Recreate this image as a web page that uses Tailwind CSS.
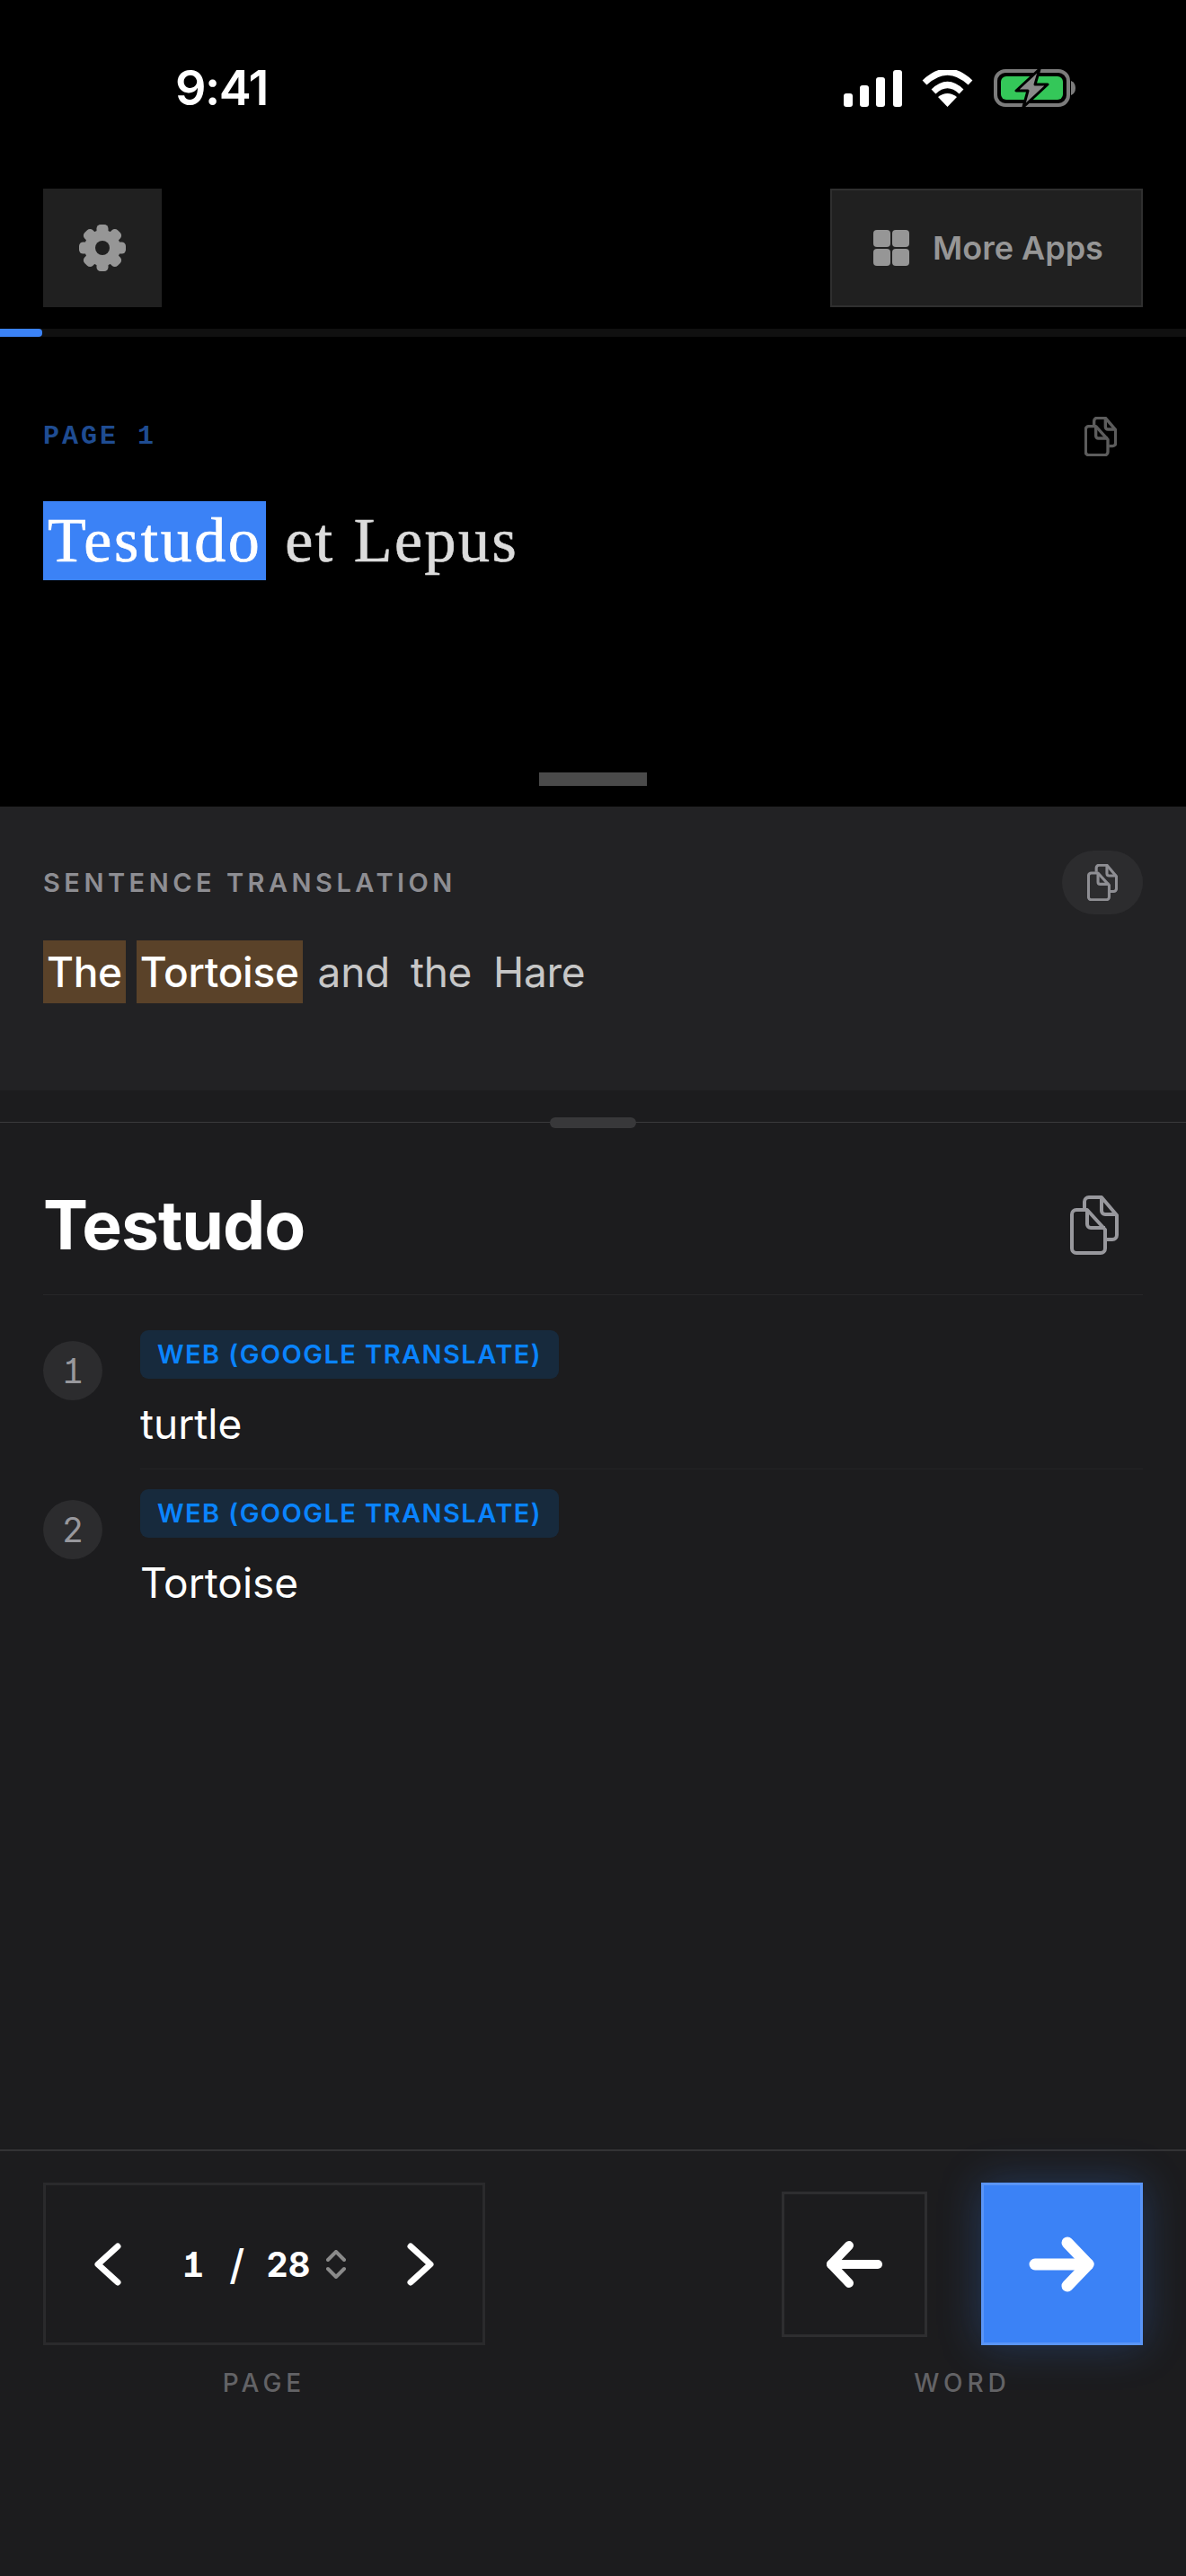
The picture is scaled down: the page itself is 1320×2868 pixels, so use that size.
<!DOCTYPE html>
<html lang="en">
<head>
    <meta charset="UTF-8">
    <meta name="viewport" content="width=device-width, initial-scale=1.0">
    <title>Reader</title>
    <script src="https://cdn.jsdelivr.net/npm/@tailwindcss/browser@4"></script>
</head>
<body class="bg-black">
<div class="w-[1320px] h-[2868px] flex flex-col bg-black font-['Inter',sans-serif] overflow-hidden">

    <!-- status bar -->
    <div class="h-[210px] shrink-0 flex items-start pt-[76px] pl-[195px] pr-[123px] justify-between">
        <span class="text-[54px] leading-[44px] font-semibold text-white tracking-[-1.500px]">9:41</span>
        <div class="flex items-center gap-[23px]">
            <svg width="65" height="41" viewBox="0 0 65 41" fill="#fff">
                <rect x="0" y="26" width="10" height="15" rx="3"/>
                <rect x="18" y="17" width="10" height="24" rx="3"/>
                <rect x="36" y="8" width="10" height="33" rx="3"/>
                <rect x="55" y="0" width="10" height="41" rx="3"/>
            </svg>
            <svg width="57" height="41" viewBox="0 0 57 41" fill="none" stroke="#fff" stroke-width="7" class="-ml-[1px]">
                <path d="M3 14Q28.500 -10 54 14"/>
                <path d="M13 24Q28.500 9 44 24"/>
                <path d="M28.500 41L18 30Q28.500 22 39 30Z" fill="#fff" stroke="none"/>
            </svg>
            <svg width="91" height="44" viewBox="0 0 91 44" fill="none">
                <rect x="2" y="3" width="81" height="38" rx="11" stroke="#7c7c7c" stroke-width="4"/>
                <rect x="8" y="9" width="69" height="26" rx="6" fill="#34c759"/>
                <path d="M86 14Q91 16 91 22Q91 28 86 30Z" fill="#7c7c7c"/>
                <path d="M51 1L25 25H38L33 43L60 18H46Z" fill="#8a8a8a" stroke="#000" stroke-width="3" stroke-linejoin="round"/>
            </svg>
        </div>
    </div>

    <!-- top buttons -->
    <div class="h-[132px] shrink-0 flex justify-between px-12">
        <button class="w-[132px] h-[132px] flex items-center justify-center bg-[#202020]">
            <svg width="52" height="52" viewBox="0 0 52 52" fill="#969696">
                <circle cx="26" cy="26" r="20"/>
                <rect x="19.500" y="0" width="13" height="52" rx="4.500"/>
                <rect x="19.500" y="0" width="13" height="52" rx="4.500" transform="rotate(45 26 26)"/>
                <rect x="19.500" y="0" width="13" height="52" rx="4.500" transform="rotate(90 26 26)"/>
                <rect x="19.500" y="0" width="13" height="52" rx="4.500" transform="rotate(135 26 26)"/>
                <circle cx="26" cy="26" r="8" fill="#202020"/>
            </svg>
        </button>
        <button class="w-[348px] h-[132px] flex items-center pl-[46px] gap-[25px] bg-[#202020] border-2 border-[#2f2f2f]">
            <svg width="41" height="40" viewBox="0 0 41 40" fill="#969696">
                <rect x="0" y="0" width="19" height="19" rx="4"/>
                <rect x="21" y="0" width="19" height="19" rx="4"/>
                <rect x="0" y="21" width="19" height="19" rx="4"/>
                <rect x="21" y="21" width="19" height="19" rx="4"/>
            </svg>
            <span class="text-[36px] font-semibold text-[#969696] leading-none">More Apps</span>
        </button>
    </div>

    <!-- progress -->
    <div class="mt-[24px] h-[9px] shrink-0 bg-[#101010]">
        <div class="h-full w-[47px] bg-[#3b82f6] rounded-r-[4px]"></div>
    </div>

    <!-- source text -->
    <div class="h-[523px] shrink-0 flex flex-col px-12">
        <div class="mt-[89px] h-[44px] flex items-center justify-between">
            <span class="text-[30px] font-bold leading-none tracking-[3px] text-[#1f4c92] font-['Liberation_Mono',monospace]">PAGE 1</span>
            <svg class="mr-[29px]" width="36" height="44" viewBox="0 0 54 66" fill="none" stroke="#5c5c5c" stroke-width="5" stroke-linejoin="round">
                <path d="M7 16H19L39 38V59a5 5 0 0 1-5 5H7a5 5 0 0 1-5-5V21a5 5 0 0 1 5-5Z"/>
                <path d="M19 16V32a4 4 0 0 0 4 4H39"/>
                <path d="M16 14V7a5 5 0 0 1 5-5H35L52 22V44a5 5 0 0 1-5 5H41"/>
                <path d="M35 2V17a4 4 0 0 0 4 4H52"/>
            </svg>
        </div>
        <div class="mt-[50px] flex items-center gap-[21px] text-[70px] leading-[88px] font-['Liberation_Serif',serif] tracking-[2.500px] text-[#dcdcdc] [-webkit-text-stroke:0.7px_currentColor]">
            <span class="bg-[#3b82f6] text-white px-[5px]">Testudo</span>
            <span class="flex gap-[21px]"><span>et</span><span>Lepus</span></span>
        </div>
        <div class="mt-auto mb-[23px] mx-auto w-[120px] h-[15px] bg-[#4a4a4a]"></div>
    </div>

    <!-- sentence translation -->
    <div class="h-[316px] shrink-0 bg-[#222224] px-12">
        <div class="pt-[49px] h-[120px] flex items-center justify-between">
            <span class="text-[29px] font-semibold leading-none tracking-[4.500px] text-[#8e8e93]">SENTENCE TRANSLATION</span>
            <button class="w-[90px] h-[71px] rounded-full bg-[#2c2c2e] flex items-center justify-center">
                <svg width="34" height="41" viewBox="0 0 54 66" fill="none" stroke="#8e8e93" stroke-width="5" stroke-linejoin="round">
                    <path d="M7 16H19L39 38V59a5 5 0 0 1-5 5H7a5 5 0 0 1-5-5V21a5 5 0 0 1 5-5Z"/>
                    <path d="M19 16V32a4 4 0 0 0 4 4H39"/>
                    <path d="M16 14V7a5 5 0 0 1 5-5H35L52 22V44a5 5 0 0 1-5 5H41"/>
                    <path d="M35 2V17a4 4 0 0 0 4 4H52"/>
                </svg>
            </button>
        </div>
        <div class="mt-[29px] flex items-center text-[46px] leading-[70px] text-[#c7c7c7] tracking-[-0.300px]">
            <span class="bg-[#5a4229] text-white font-medium px-[4px]">The</span>
            <span class="bg-[#5a4229] text-white font-medium px-[4px] ml-[12px]">Tortoise</span>
            <span class="ml-[17px]">and</span>
            <span class="ml-[23px]">the</span>
            <span class="ml-[24px]">Hare</span>
        </div>
    </div>

    <!-- dictionary -->
    <div class="flex-1 flex flex-col bg-[#1c1c1e] min-h-0">
        <div class="relative mt-[35px] h-[1px] shrink-0 bg-[#3a3a3c]">
            <div class="absolute left-[612px] -top-[5px] w-[96px] h-[12px] rounded-full bg-[#38383a]"></div>
        </div>
        <div class="flex-1 px-12">
            <div class="h-[192px] pt-[36px] flex items-center justify-between border-b border-[#262628]">
                <h1 class="text-[75px] font-bold leading-none text-white tracking-[-1px]">Testudo</h1>
                <svg class="mr-[27px]" width="54" height="66" viewBox="0 0 54 66" fill="none" stroke="#98989d" stroke-width="4" stroke-linejoin="round">
                    <path d="M7 16H19L39 38V59a5 5 0 0 1-5 5H7a5 5 0 0 1-5-5V21a5 5 0 0 1 5-5Z"/>
                    <path d="M19 16V32a4 4 0 0 0 4 4H39"/>
                    <path d="M16 14V7a5 5 0 0 1 5-5H35L52 22V44a5 5 0 0 1-5 5H41"/>
                    <path d="M35 2V17a4 4 0 0 0 4 4H52"/>
                </svg>
            </div>
            <div class="flex gap-[42px] pt-[39px]">
                <div class="mt-[12px] w-[66px] h-[66px] shrink-0 rounded-full bg-[#2c2c2e] flex items-center justify-center text-[38px] text-[#98989d] [font-feature-settings:'tnum','cv01']">1</div>
                <div class="flex-1 pb-[20px] border-b border-[#232325]">
                    <div class="w-fit h-[54px] leading-[54px] px-[19px] rounded-[9px] bg-[#172a3d] text-[#0a84ff] text-[29px] font-semibold tracking-[1.450px]">WEB (GOOGLE TRANSLATE)</div>
                    <div class="mt-[20px] text-[46px] leading-[60px] text-white">turtle</div>
                </div>
            </div>
            <div class="flex gap-[42px] pt-[22px]">
                <div class="mt-[12px] w-[66px] h-[66px] shrink-0 rounded-full bg-[#2c2c2e] flex items-center justify-center text-[38px] text-[#98989d] [font-feature-settings:'tnum','cv01']">2</div>
                <div class="flex-1">
                    <div class="w-fit h-[54px] leading-[54px] px-[19px] rounded-[9px] bg-[#172a3d] text-[#0a84ff] text-[29px] font-semibold tracking-[1.450px]">WEB (GOOGLE TRANSLATE)</div>
                    <div class="mt-[20px] text-[46px] leading-[60px] text-white">Tortoise</div>
                </div>
            </div>
        </div>

        <!-- bottom controls -->
        <div class="h-[475px] shrink-0 border-t-2 border-[#333335] px-12 pt-[35px] flex justify-between items-start">
            <div class="flex flex-col items-center">
                <div class="w-[492px] h-[181px] border-[3px] border-[#2a2a2c] flex items-center pl-[54px] pr-[54px]">
                    <svg width="30" height="48" viewBox="0 0 30 48" fill="none" stroke="#fff" stroke-width="7" stroke-linecap="round" stroke-linejoin="round"><path d="M26 4L4 24L26 44"/></svg>
                    <div class="flex-1 flex items-center justify-center text-[38px] font-bold text-white leading-none [font-feature-settings:'tnum','cv01']">
                        <span>1</span>
                        <span class="ml-[28px] text-[46px] font-medium">/</span>
                        <span class="ml-[24px]">28</span>
                        <svg class="ml-[18px]" width="22" height="32" viewBox="0 0 22 32" fill="none" stroke="#8a8a8a" stroke-width="4" stroke-linecap="round" stroke-linejoin="round"><path d="M2 11L11 2L20 11"/><path d="M2 21L11 30L20 21"/></svg>
                    </div>
                    <svg width="30" height="48" viewBox="0 0 30 48" fill="none" stroke="#fff" stroke-width="7" stroke-linecap="round" stroke-linejoin="round"><path d="M4 4L26 24L4 44"/></svg>
                </div>
                <span class="mt-[28px] text-[28px] font-medium leading-none tracking-[5px] text-[#636366]">PAGE</span>
            </div>
            <div class="flex flex-col items-center">
                <div class="flex items-center gap-[60px]">
                    <button class="w-[162px] h-[162px] border-[3px] border-[#2e2e30] flex items-center justify-center">
                        <svg width="64" height="54" viewBox="0 0 64 54" fill="none" stroke="#fff" stroke-width="10" stroke-linecap="round" stroke-linejoin="round"><path d="M58 27H6"/><path d="M26 6L6 27L26 48"/></svg>
                    </button>
                    <button class="w-[180px] h-[181px] bg-[#3b82f6] border-[3px] border-[#5a95f7] shadow-[0_0_44px_rgba(59,130,246,0.28)] flex items-center justify-center">
                        <svg width="74" height="62" viewBox="0 0 74 62" fill="none" stroke="#fff" stroke-width="13" stroke-linecap="round" stroke-linejoin="round"><path d="M7 31H66"/><path d="M43 7L66 31L43 55"/></svg>
                    </button>
                </div>
                <span class="mt-[28px] text-[28px] font-medium leading-none tracking-[5px] text-[#636366]">WORD</span>
            </div>
        </div>
    </div>
</div>
</body>
</html>
